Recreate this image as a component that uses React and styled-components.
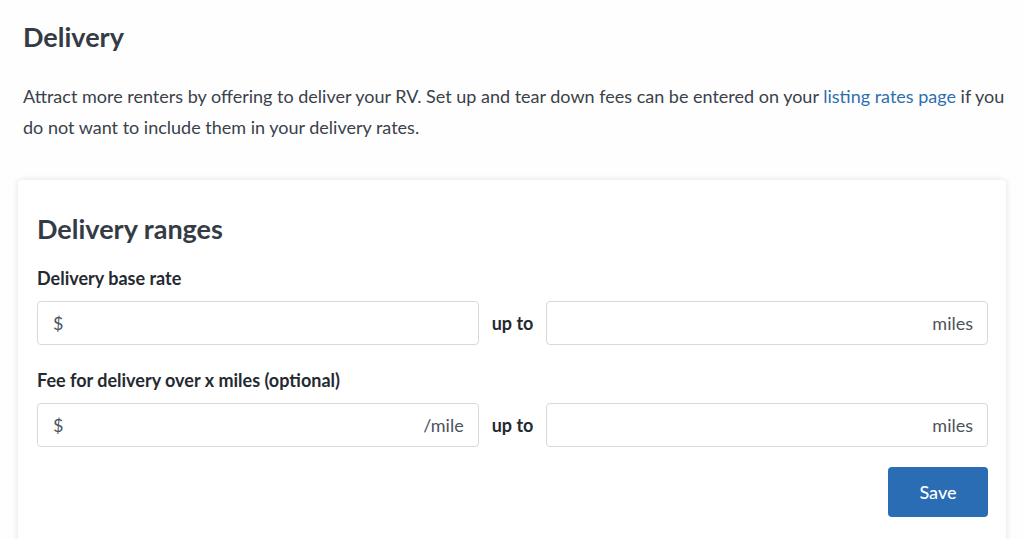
import styled, { createGlobalStyle } from "styled-components";

const Global = createGlobalStyle`
  body {
    margin: 0;
    background: #fefefe;
    font-family: "Source Sans Pro", Lato, "Noto Sans", sans-serif;
    color: #3a414a;
  }
`;

const Page = styled.main`
  padding: 18px 18px 0 23px;
  height: 539px;
  box-sizing: border-box;
  overflow: hidden;
`;

const Title = styled.h1`
  margin: 0;
  font-size: 27px;
  font-weight: 700;
  color: #343b45;
  line-height: 38px;
`;

const Intro = styled.p`
  margin: 25px 0 0;
  font-size: 18px;
  line-height: 31px;
  color: #3a414a;
  max-width: 985px;
`;

const Link = styled.a`
  color: #2f6fb0;
  text-decoration: none;
`;

const Card = styled.section`
  margin: 37px 0 0 -5px;
  background: #fff;
  border-radius: 4px;
  box-shadow: 0 0 6px rgba(0, 0, 0, 0.12);
  padding: 30px 18px 30px 19px;
  height: 400px;
`;

const CardTitle = styled.h2`
  margin: 0;
  font-size: 27px;
  font-weight: 700;
  color: #343b45;
  line-height: 38px;
`;

const Label = styled.div`
  font-size: 18px;
  font-weight: 700;
  color: #252a31;
  margin: ${(p) => p.$top}px 0 12px;
  line-height: 22px;
`;

const Row = styled.div`
  display: flex;
  align-items: center;
  gap: 13px;
`;

const Field = styled.div`
  flex: 1;
  height: 44px;
  box-sizing: border-box;
  border: 1px solid #d4dae1;
  border-radius: 4px;
  display: flex;
  align-items: center;
  justify-content: space-between;
  padding: 0 14px 0 15px;
  font-size: 18px;
  color: #4b535c;
  background: #fff;
`;

const UpTo = styled.span`
  font-size: 18px;
  font-weight: 700;
  color: #252a31;
`;

const Actions = styled.div`
  display: flex;
  justify-content: flex-end;
  margin-top: 20px;
`;

const Button = styled.button`
  width: 100px;
  height: 50px;
  border: none;
  border-radius: 4px;
  background: #2a6db5;
  color: #fff;
  font-family: inherit;
  font-size: 18px;
  font-weight: 500;
`;

export default function App() {
  return (
    <Page>
      <Global />
      <Title>Delivery</Title>
      <Intro>
        Attract more renters by offering to deliver your RV. Set up and tear down fees can be
        entered on your <Link href="#">listing rates page</Link> if you do not want to include them
        in your delivery rates.
      </Intro>
      <Card>
        <CardTitle>Delivery ranges</CardTitle>
        <Label $top={19}>Delivery base rate</Label>
        <Row>
          <Field>
            <span>$</span>
            <span></span>
          </Field>
          <UpTo>up to</UpTo>
          <Field>
            <span></span>
            <span>miles</span>
          </Field>
        </Row>
        <Label $top={24}>Fee for delivery over x miles (optional)</Label>
        <Row>
          <Field>
            <span>$</span>
            <span>/mile</span>
          </Field>
          <UpTo>up to</UpTo>
          <Field>
            <span></span>
            <span>miles</span>
          </Field>
        </Row>
        <Actions>
          <Button>Save</Button>
        </Actions>
      </Card>
    </Page>
  );
}
